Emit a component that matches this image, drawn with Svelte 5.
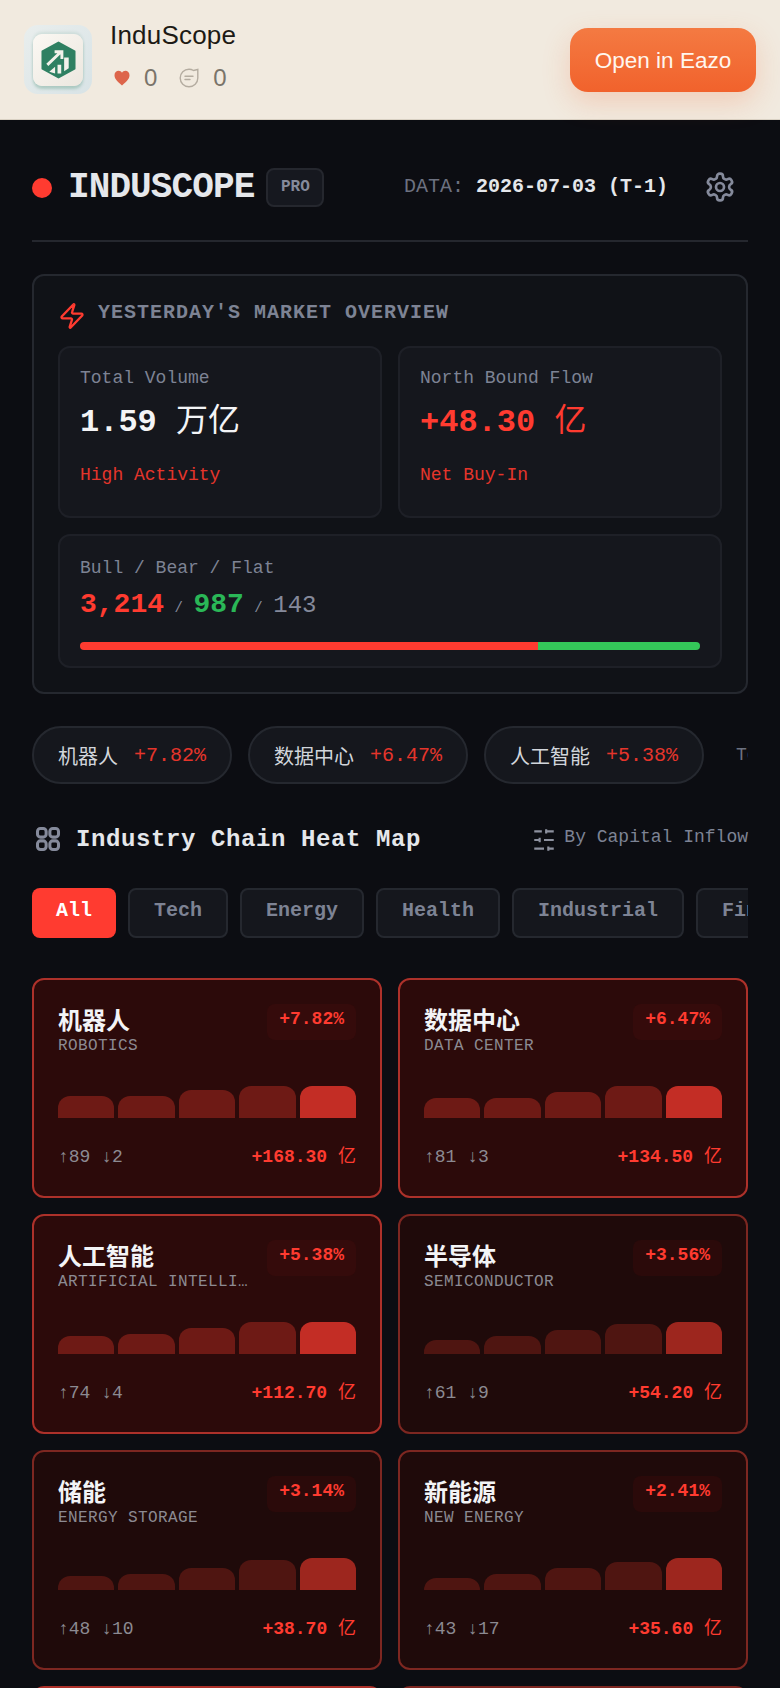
<script>
  const pills = [
    { name: '机器人', pct: '+7.82%' },
    { name: '数据中心', pct: '+6.47%' },
    { name: '人工智能', pct: '+5.38%' }
  ];
  const tabs = ['All', 'Tech', 'Energy', 'Health', 'Industrial', 'Finance'];
  const cards = [
    { cn: '机器人', en: 'ROBOTICS', pct: '+7.82%', up: 89, down: 2, flow: '+168.30', bars: [22, 22, 28, 32, 32], tone: 'hot' },
    { cn: '数据中心', en: 'DATA CENTER', pct: '+6.47%', up: 81, down: 3, flow: '+134.50', bars: [20, 20, 26, 32, 32], tone: 'hot' },
    { cn: '人工智能', en: 'ARTIFICIAL INTELLIGENCE', pct: '+5.38%', up: 74, down: 4, flow: '+112.70', bars: [18, 20, 26, 32, 32], tone: 'hot' },
    { cn: '半导体', en: 'SEMICONDUCTOR', pct: '+3.56%', up: 61, down: 9, flow: '+54.20', bars: [14, 18, 24, 30, 32], tone: 'mild' },
    { cn: '储能', en: 'ENERGY STORAGE', pct: '+3.14%', up: 48, down: 10, flow: '+38.70', bars: [14, 16, 22, 30, 32], tone: 'mild' },
    { cn: '新能源', en: 'NEW ENERGY', pct: '+2.41%', up: 43, down: 17, flow: '+35.60', bars: [12, 16, 22, 28, 32], tone: 'mild' },
    { cn: '光模块', en: 'OPTICAL MODULE', pct: '+2.12%', up: 38, down: 6, flow: '+28.40', bars: [14, 16, 22, 28, 32], tone: 'hot' },
    { cn: '军工', en: 'DEFENSE', pct: '+1.86%', up: 32, down: 12, flow: '+21.10', bars: [12, 16, 22, 28, 32], tone: 'mild' }
  ];
</script>

<div class="page">
  <header class="bar">
    <div class="logo">
      <div class="logo-face">
        <svg viewBox="2 0 36 40" aria-hidden="true">
          <path d="M20 2 36.500 11V29L20 38 3.500 29V11Z" fill="#2f8062" stroke="#2f8062" stroke-width="2" stroke-linejoin="round" />
          <path d="M8.500 25 21.500 12.500M16 11.500h7.500V19" fill="none" stroke="#f3f1ea" stroke-width="3" />
          <path d="M10.500 32 16.500 27V34ZM19 25h3.800V34H19ZM25.800 17.500h4.700V28.500l-4.700 3Z" fill="#f3f1ea" />
        </svg>
      </div>
    </div>
    <div class="app-info">
      <div class="app-name">InduScope</div>
      <div class="app-stats">
        <svg class="heart" viewBox="0 0 16 16" width="16" height="16" aria-hidden="true">
          <path d="M8 15.500C3.500 11.500.5 9 .5 5.200.5 2.600 2.400.8 4.600.8 6 .8 7.200 1.500 8 2.700 8.800 1.500 10 .8 11.400.8c2.200 0 4.100 1.800 4.100 4.400C15.500 9 12.500 11.500 8 15.500Z" fill="#dd654b" />
        </svg>
        <span class="count">0</span>
        <svg class="bubble" viewBox="0 0 20 20" width="20" height="20" aria-hidden="true">
          <path d="M10 1.200C5.100 1.200 1.200 5.100 1.200 10S5.100 18.800 10 18.800 18.800 14.900 18.800 10V1.500L14.500 2.500C13.200 1.700 11.700 1.200 10 1.200Z" fill="none" stroke="#b4aca0" stroke-width="1.400" />
          <path d="M6 8.200h8M6 11.500h5" fill="none" stroke="#b4aca0" stroke-width="1.400" stroke-linecap="round" />
        </svg>
        <span class="count">0</span>
      </div>
    </div>
    <button class="open">Open in Eazo</button>
  </header>

  <main class="main">
    <section class="brand">
      <span class="dot"></span>
      <h1>INDUSCOPE</h1>
      <span class="pro">PRO</span>
      <span class="data"><span class="data-key">DATA:</span> <b>2026-07-03 (T-1)</b></span>
      <svg class="gear" viewBox="0 0 24 24" width="32" height="32" aria-hidden="true">
        <path d="M12.220 2h-.44a2 2 0 0 0-2 2v.18a2 2 0 0 1-1 1.730l-.43.250a2 2 0 0 1-2 0l-.15-.08a2 2 0 0 0-2.730.73l-.22.380a2 2 0 0 0 .73 2.730l.15.100a2 2 0 0 1 1 1.720v.510a2 2 0 0 1-1 1.740l-.15.090a2 2 0 0 0-.73 2.730l.22.380a2 2 0 0 0 2.730.730l.15-.08a2 2 0 0 1 2 0l.43.250a2 2 0 0 1 1 1.730V20a2 2 0 0 0 2 2h.44a2 2 0 0 0 2-2v-.18a2 2 0 0 1 1-1.730l.43-.250a2 2 0 0 1 2 0l.15.080a2 2 0 0 0 2.730-.730l.22-.390a2 2 0 0 0-.73-2.730l-.15-.080a2 2 0 0 1-1-1.740v-.500a2 2 0 0 1 1-1.740l.15-.090a2 2 0 0 0 .73-2.730l-.22-.380a2 2 0 0 0-2.730-.730l-.15.080a2 2 0 0 1-2 0l-.43-.250a2 2 0 0 1-1-1.730V4a2 2 0 0 0-2-2z" fill="none" stroke="#858a9b" stroke-width="2" />
        <circle cx="12" cy="12" r="3" fill="none" stroke="#858a9b" stroke-width="2" />
      </svg>
    </section>

    <section class="overview">
      <div class="ov-head">
        <svg viewBox="0 0 24 24" width="28" height="28" aria-hidden="true">
          <path d="M4 14a1 1 0 0 1-.78-1.630l9.900-10.200a.500.500 0 0 1 .860.460l-1.920 6.020A1 1 0 0 0 13 10h7a1 1 0 0 1 .780 1.630l-9.900 10.200a.500.500 0 0 1-.860-.460l1.920-6.020A1 1 0 0 0 11 14z" fill="none" stroke="#ff3b30" stroke-width="2" />
        </svg>
        <h2>YESTERDAY'S MARKET OVERVIEW</h2>
      </div>
      <div class="stat-row">
        <div class="stat">
          <div class="label">Total Volume</div>
          <div class="big">1.59 <span class="unit">万亿</span></div>
          <div class="note">High Activity</div>
        </div>
        <div class="stat">
          <div class="label">North Bound Flow</div>
          <div class="big red">+48.30 <span class="unit">亿</span></div>
          <div class="note">Net Buy-In</div>
        </div>
      </div>
      <div class="stat wide">
        <div class="label">Bull / Bear / Flat</div>
        <div class="counts">
          <b class="red">3,214</b><i>/</i><b class="green">987</b><i>/</i><span>143</span>
        </div>
        <div class="ratio"><div class="ratio-up"></div><div class="ratio-down"></div></div>
      </div>
    </section>

    <section class="pills">
      {#each pills as p}
        <div class="pill"><span class="pill-name">{p.name}</span><span class="pill-pct">{p.pct}</span></div>
      {/each}
      <div class="pill-rest">Top</div>
    </section>

    <section class="heat-head">
      <svg class="grid-ic" viewBox="0 0 24 24" width="28" height="28" aria-hidden="true">
        <rect x="3" y="3" width="7.400" height="7.400" rx="2.500" />
        <rect x="13.600" y="3" width="7.400" height="7.400" rx="2.500" />
        <rect x="3" y="13.600" width="7.400" height="7.400" rx="2.500" />
        <rect x="13.600" y="13.600" width="7.400" height="7.400" rx="2.500" />
      </svg>
      <h2>Industry Chain Heat Map</h2>
      <svg class="sliders" viewBox="0 0 24 24" width="26" height="26" aria-hidden="true">
        <path d="M21 4h-7M10 4H3M21 12h-9M8 12H3M21 20h-5M12 20H3M14 2v4M8 10v4M16 18v4" />
      </svg>
      <span class="sort">By Capital Inflow</span>
    </section>

    <section class="tabs">
      {#each tabs as t, i}
        <div class="tab" class:active={i === 0}>{t}</div>
      {/each}
    </section>

    <section class="cards">
      {#each cards as c}
        <article class="card {c.tone}">
          <div class="card-top">
            <div class="names">
              <div class="cn">{c.cn}</div>
              <div class="en">{c.en}</div>
            </div>
            <div class="badge">{c.pct}</div>
          </div>
          <div class="chart">
            {#each c.bars as h, i}
              <div class="col" class:last={i === 4} style="height:{h}px"></div>
            {/each}
          </div>
          <div class="card-foot">
            <span class="updown">↑{c.up} ↓{c.down}</span>
            <span class="flow"><b>{c.flow}</b> 亿</span>
          </div>
        </article>
      {/each}
    </section>
  </main>
</div>

<style>
  :global(body) {
    margin: 0;
    background: #0c0d12;
  }
  .page {
    width: 780px;
    height: 1688px;
    overflow: hidden;
    background: #0c0d12;
    font-family: "Liberation Mono", "Noto Sans CJK SC", monospace;
  }
  .bar {
    position: relative;
    z-index: 1;
    box-sizing: border-box;
    height: 120px;
    padding: 0 24px;
    display: flex;
    align-items: center;
    background: #f1eadf;
    border-bottom: 1px solid #d9d1c3;
    font-family: "Liberation Sans", sans-serif;
  }
  .logo {
    width: 68px;
    height: 69px;
    border-radius: 14px;
    background: linear-gradient(135deg, #e9eeed, #d8e3e6);
    display: flex;
    align-items: center;
    justify-content: center;
  }
  .logo-face {
    width: 50px;
    height: 52px;
    border-radius: 9px;
    background: linear-gradient(135deg, #fbf8f3, #ece7df);
    box-shadow: 0 3px 3px rgba(47, 128, 98, 0.28), 0 -2px 3px rgba(47, 128, 98, 0.12);
    display: flex;
    align-items: center;
    justify-content: center;
  }
  .logo-face svg {
    width: 35px;
    height: 40px;
  }
  .app-info {
    margin-left: 18px;
    flex: 1;
    margin-top: -8px;
  }
  .app-name {
    font-size: 26px;
    line-height: 30px;
    letter-spacing: 0.2px;
    color: #1d1a15;
  }
  .app-stats {
    margin-top: 14px;
    display: flex;
    align-items: center;
    height: 28px;
    color: #7a746a;
    font-size: 24px;
  }
  .heart {
    margin-left: 4px;
  }
  .count {
    margin-left: 14px;
  }
  .bubble {
    margin-left: 22px;
  }
  .open {
    width: 186px;
    height: 64px;
    border: 0;
    padding: 2px 0 0;
    border-radius: 18px;
    background: linear-gradient(180deg, #f47a42, #f1622c);
    color: #fff6ee;
    font: 22.500px "Liberation Sans", sans-serif;
    box-shadow: 0 10px 28px rgba(241, 98, 44, 0.22);
  }

  .main {
    padding: 0 32px;
  }
  .brand {
    box-sizing: border-box;
    height: 122px;
    padding-top: 48px;
    display: flex;
    align-items: flex-start;
    border-bottom: 2px solid #25272e;
  }
  .dot {
    width: 20px;
    height: 20px;
    margin-top: 10px;
    border-radius: 50%;
    background: #ff3b30;
  }
  .brand h1 {
    margin: 0 0 0 16px;
    font-size: 36px;
    line-height: 40px;
    letter-spacing: -0.9px;
    color: #e5e7eb;
    font-weight: 700;
  }
  .pro {
    margin: 0 0 0 12px;
    box-sizing: border-box;
    width: 58px;
    height: 39px;
    border: 2px solid #25272e;
    border-radius: 8px;
    background: #16181f;
    color: #858a9b;
    font-size: 16px;
    font-weight: 700;
    line-height: 34px;
    text-align: center;
  }
  .data {
    margin-left: auto;
    font-size: 20px;
    line-height: 38px;
    white-space: pre;
    color: #e5e7eb;
  }
  .data-key {
    color: #6c7180;
  }
  .gear {
    margin: 3px 12px 0 36px;
  }

  .overview {
    box-sizing: border-box;
    margin-top: 32px;
    height: 420px;
    padding: 24px;
    background: #101217;
    border: 2px solid #25282f;
    border-radius: 12px;
  }
  .ov-head {
    height: 46px;
    display: flex;
    align-items: flex-start;
    gap: 12px;
  }
  .ov-head svg {
    margin-top: 2px;
    flex: none;
  }
  .ov-head h2 {
    margin: 3px 0 0;
    font-size: 20px;
    line-height: 20px;
    letter-spacing: 1px;
    color: #7d8394;
    font-weight: 700;
  }
  .stat-row {
    display: grid;
    grid-template-columns: 1fr 1fr;
    gap: 16px;
  }
  .stat {
    box-sizing: border-box;
    height: 172px;
    padding: 18px 20px;
    border: 2px solid #1e2027;
    border-radius: 12px;
    background: #15171d;
  }
  .label {
    font-size: 18px;
    line-height: 24px;
    color: #7d8394;
  }
  .big {
    margin-top: 11px;
    font-size: 32px;
    line-height: 44px;
    font-weight: 700;
    color: #f3f4f6;
  }
  .unit {
    font-weight: 400;
  }
  .red {
    color: #ff3b30;
  }
  .green {
    color: #2ab757;
  }
  .note {
    margin-top: 18px;
    font-size: 18px;
    line-height: 24px;
    color: #e5352b;
  }
  .wide {
    margin-top: 16px;
    height: 134px;
    padding: 20px 20px;
  }
  .counts {
    margin-top: 7px;
    height: 36px;
    display: flex;
    align-items: baseline;
    color: #858a9b;
    font-size: 24px;
    line-height: 36px;
  }
  .counts b {
    font-size: 28px;
  }
  .counts i {
    margin: 0 10.500px;
    font-size: 14px;
    font-style: normal;
  }
  .ratio {
    margin-top: 19px;
    height: 8px;
    border-radius: 4px;
    overflow: hidden;
    display: flex;
  }
  .ratio-up {
    width: 458px;
    background: #ff3b30;
  }
  .ratio-down {
    flex: 1;
    background: #34c759;
  }

  .pills {
    margin-top: 32px;
    display: flex;
    gap: 16px;
    overflow: hidden;
  }
  .pill {
    box-sizing: border-box;
    flex: none;
    height: 58px;
    padding: 0 24px;
    display: flex;
    align-items: center;
    gap: 16px;
    border: 2px solid #25282f;
    border-radius: 29px;
    background: #15171d;
    font-size: 20px;
  }
  .pill-name {
    color: #d1d5db;
  }
  .pill-pct {
    color: #e5352b;
  }
  .pill-rest {
    flex: none;
    margin-left: 16px;
    line-height: 58px;
    font-size: 18px;
    color: #6c7180;
  }

  .heat-head {
    margin-top: 41px;
    height: 28px;
    display: flex;
    align-items: center;
  }
  .grid-ic {
    margin-left: 2px;
    fill: none;
    stroke: #858a9b;
    stroke-width: 2.600;
  }
  .heat-head h2 {
    margin: 0 0 0 14px;
    font-size: 24px;
    letter-spacing: 0.6px;
    font-weight: 700;
    color: #e5e7eb;
  }
  .sliders {
    margin-left: auto;
    fill: none;
    stroke: #8d919f;
    stroke-width: 2;
    margin-top: 2px;
  }
  .sort {
    margin-left: 7px;
    margin-top: -4px;
    font-size: 18px;
    color: #7d8394;
  }

  .tabs {
    margin-top: 35px;
    display: flex;
    gap: 12px;
    overflow: hidden;
  }
  .tab {
    box-sizing: border-box;
    flex: none;
    height: 50px;
    padding: 9px 24px 0;
    border: 2px solid #25282f;
    border-radius: 8px;
    background: #15171d;
    color: #7d8394;
    font-size: 20px;
    font-weight: 700;
    line-height: 24px;
  }
  .tab.active {
    border: 0;
    padding-top: 11px;
    background: #ff3b30;
    color: #fff;
  }

  .cards {
    margin-top: 40px;
    display: grid;
    grid-template-columns: 350px 350px;
    gap: 16px;
  }
  .card {
    box-sizing: border-box;
    height: 220px;
    padding: 24px;
    border: 2px solid;
    border-radius: 12px;
    min-width: 0;
  }
  .hot {
    background: #2c0a0a;
    border-color: #ad312a;
    --bar: #6e1a15;
    --top: #c32d25;
    --badge: #350b0b;
  }
  .mild {
    background: #1f0a0a;
    border-color: #7d2721;
    --bar: #4f1511;
    --top: #9d261e;
    --badge: #2b0a0a;
  }
  .card-top {
    display: flex;
    justify-content: space-between;
    gap: 16px;
    height: 58px;
  }
  .names {
    min-width: 0;
  }
  .cn {
    margin-top: 5px;
    font-size: 24px;
    line-height: 28px;
    font-weight: 700;
    color: #f3f4f6;
  }
  .en {
    margin-top: -1px;
    font-size: 16px;
    line-height: 20px;
    letter-spacing: 0.4px;
    color: #8c8a92;
    white-space: nowrap;
    overflow: hidden;
    text-overflow: ellipsis;
  }
  .badge {
    flex: none;
    box-sizing: border-box;
    height: 36px;
    padding: 0 12px;
    border-radius: 8px;
    background: var(--badge);
    color: #ff3b30;
    font-size: 18px;
    font-weight: 700;
    line-height: 30px;
  }
  .chart {
    height: 32px;
    margin-top: 24px;
    display: flex;
    align-items: flex-end;
    gap: 4px;
  }
  .col {
    flex: 1;
    border-radius: 12px 12px 0 0;
    background: var(--bar);
  }
  .col.last {
    background: var(--top);
  }
  .card-foot {
    margin-top: 27px;
    display: flex;
    justify-content: space-between;
    font-size: 18px;
    line-height: 24px;
  }
  .updown {
    color: #8c8a92;
  }
  .flow {
    color: #ff3b30;
  }
</style>
